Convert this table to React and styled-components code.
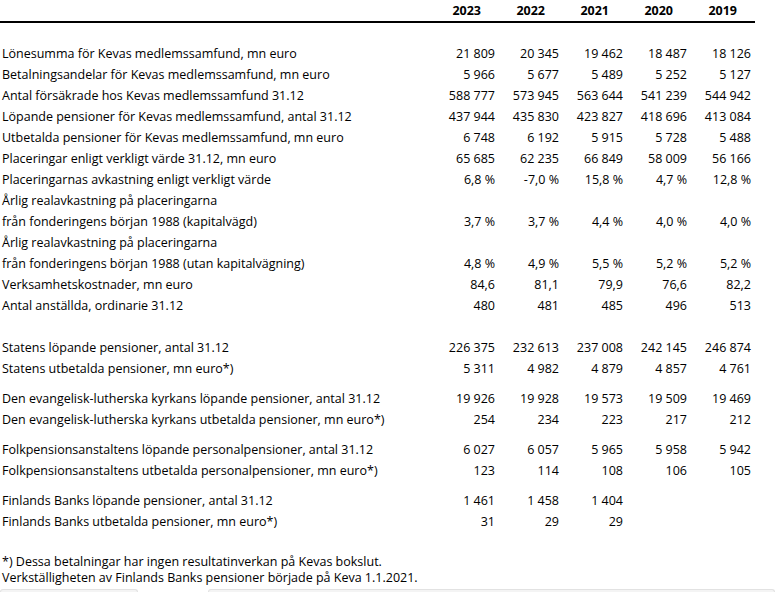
import React from "react";
import styled, { createGlobalStyle } from "styled-components";

const GlobalStyle = createGlobalStyle`
  html, body {
    margin: 0;
    padding: 0;
    background: #fff;
  }
  body {
    font-family: "Open Sans", "Noto Sans", "Liberation Sans", sans-serif;
    color: #000;
    overflow: hidden;
  }
`;

const years = ["2023", "2022", "2021", "2020", "2019"];

const groups = [
  [
    ["Lönesumma för Kevas medlemssamfund, mn euro", "21 809", "20 345", "19 462", "18 487", "18 126"],
    ["Betalningsandelar för Kevas medlemssamfund, mn euro", "5 966", "5 677", "5 489", "5 252", "5 127"],
    ["Antal försäkrade hos Kevas medlemssamfund 31.12", "588 777", "573 945", "563 644", "541 239", "544 942"],
    ["Löpande pensioner för Kevas medlemssamfund, antal 31.12", "437 944", "435 830", "423 827", "418 696", "413 084"],
    ["Utbetalda pensioner för Kevas medlemssamfund, mn euro", "6 748", "6 192", "5 915", "5 728", "5 488"],
    ["Placeringar enligt verkligt värde 31.12, mn euro", "65 685", "62 235", "66 849", "58 009", "56 166"],
    ["Placeringarnas avkastning enligt verkligt värde", "6,8 %", "-7,0 %", "15,8 %", "4,7 %", "12,8 %"],
    ["Årlig realavkastning på placeringarna"],
    ["från fonderingens början 1988 (kapitalvägd)", "3,7 %", "3,7 %", "4,4 %", "4,0 %", "4,0 %"],
    ["Årlig realavkastning på placeringarna"],
    ["från fonderingens början 1988 (utan kapitalvägning)", "4,8 %", "4,9 %", "5,5 %", "5,2 %", "5,2 %"],
    ["Verksamhetskostnader, mn euro", "84,6", "81,1", "79,9", "76,6", "82,2"],
    ["Antal anställda, ordinarie 31.12", "480", "481", "485", "496", "513"],
  ],
  [
    ["Statens löpande pensioner, antal 31.12", "226 375", "232 613", "237 008", "242 145", "246 874"],
    ["Statens utbetalda pensioner, mn euro*)", "5 311", "4 982", "4 879", "4 857", "4 761"],
  ],
  [
    ["Den evangelisk-lutherska kyrkans löpande pensioner, antal 31.12", "19 926", "19 928", "19 573", "19 509", "19 469"],
    ["Den evangelisk-lutherska kyrkans utbetalda pensioner, mn euro*)", "254", "234", "223", "217", "212"],
  ],
  [
    ["Folkpensionsanstaltens löpande personalpensioner, antal 31.12", "6 027", "6 057", "5 965", "5 958", "5 942"],
    ["Folkpensionsanstaltens utbetalda personalpensioner, mn euro*)", "123", "114", "108", "106", "105"],
  ],
  [
    ["Finlands Banks löpande pensioner, antal 31.12", "1 461", "1 458", "1 404", "", ""],
    ["Finlands Banks utbetalda pensioner, mn euro*)", "31", "29", "29", "", ""],
  ],
];

const Page = styled.div`
  width: 775px;
  height: 592px;
  display: flex;
  flex-direction: column;
`;

const Table = styled.div`
  width: 755px;
  font-size: 12.5px;
`;

const Row = styled.div`
  display: grid;
  grid-template-columns: 431px repeat(5, 64px);
  height: 21px;
  line-height: 21px;
`;

const HeadRow = styled(Row)`
  height: 20px;
  line-height: 20px;
  padding-top: 1px;
  border-bottom: 2px solid #000;
  font-weight: 700;
`;

const HeadCell = styled.div`
  text-align: right;
  padding-right: 14px;
`;

const Label = styled.div`
  padding-left: 2px;
  white-space: nowrap;
`;

const Num = styled.div`
  text-align: right;
  white-space: nowrap;
`;

const Group = styled.div`
  margin-top: ${(p) => p.$gap}px;
`;

const Footer = styled.div`
  margin-top: 22px;
  padding-left: 2px;
  font-size: 12.5px;
  line-height: 16px;
  white-space: nowrap;
`;

const TabStrip = styled.div`
  margin-top: auto;
  display: flex;
  gap: 70px;
  height: 3px;
  flex-shrink: 0;
`;

const Tab = styled.div`
  width: ${(p) => p.$w}px;
  border: 1px solid #e2e2e2;
  border-bottom: none;
  border-radius: 3px 3px 0 0;
  background: #f4f4f4;
`;

export default function App() {
  return (
    <Page>
      <GlobalStyle />
      <Table>
        <HeadRow>
          <div />
          {years.map((y) => (
            <HeadCell key={y}>{y}</HeadCell>
          ))}
        </HeadRow>
        {groups.map((rows, gi) => (
          <Group key={gi} $gap={gi === 0 ? 20 : gi === 1 ? 21 : 9}>
            {rows.map((r, ri) => (
              <Row key={ri}>
                <Label>{r[0]}</Label>
                {[1, 2, 3, 4, 5].map((i) => (
                  <Num key={i}>{r[i] || ""}</Num>
                ))}
              </Row>
            ))}
          </Group>
        ))}
      </Table>
      <Footer>
        *) Dessa betalningar har ingen resultatinverkan på Kevas bokslut.
        <br />
        Verkställigheten av Finlands Banks pensioner började på Keva 1.1.2021.
      </Footer>
      <TabStrip>
        <Tab $w={137} />
        <Tab $w={568} />
      </TabStrip>
    </Page>
  );
}
